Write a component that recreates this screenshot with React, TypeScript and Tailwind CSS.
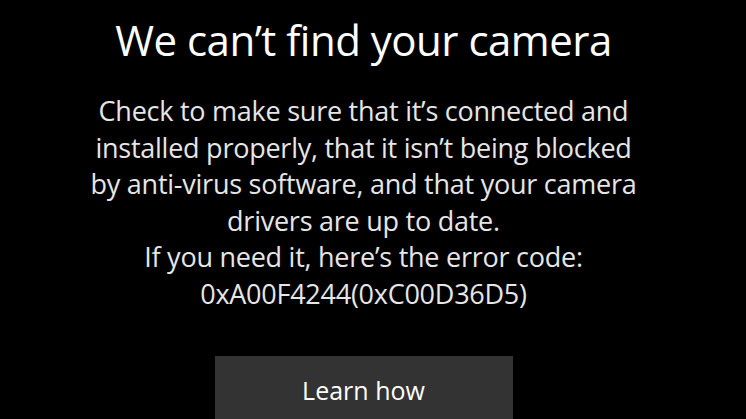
export default function App() {
  const font = { fontFamily: '"Open Sans", "Noto Sans", sans-serif' };
  return (
    <div className="w-[746px] h-[419px] bg-black overflow-hidden flex flex-col items-center text-center pr-[19px]" style={font}>
      <h1 className="mt-[10px] text-[42px] leading-[60px] text-white font-normal tracking-[-0.5px]">We can’t find your camera</h1>
      <div className="mt-[23px] text-[27px] leading-[36.5px] text-[#e6e6e6] tracking-[-0.25px]">
        <div>Check to make sure that it’s connected and</div>
        <div>installed properly, that it isn’t being blocked</div>
        <div>by anti-virus software, and that your camera</div>
        <div>drivers are up to date.</div>
        <div>If you need it, here’s the error code:</div>
        <div>0xA00F4244(0xC00D36D5)</div>
      </div>
      <button className="mt-[44px] w-[298px] h-[80px] bg-[#333333] text-white text-[25px] flex justify-center pt-[16px]">Learn how</button>
    </div>
  );
}
